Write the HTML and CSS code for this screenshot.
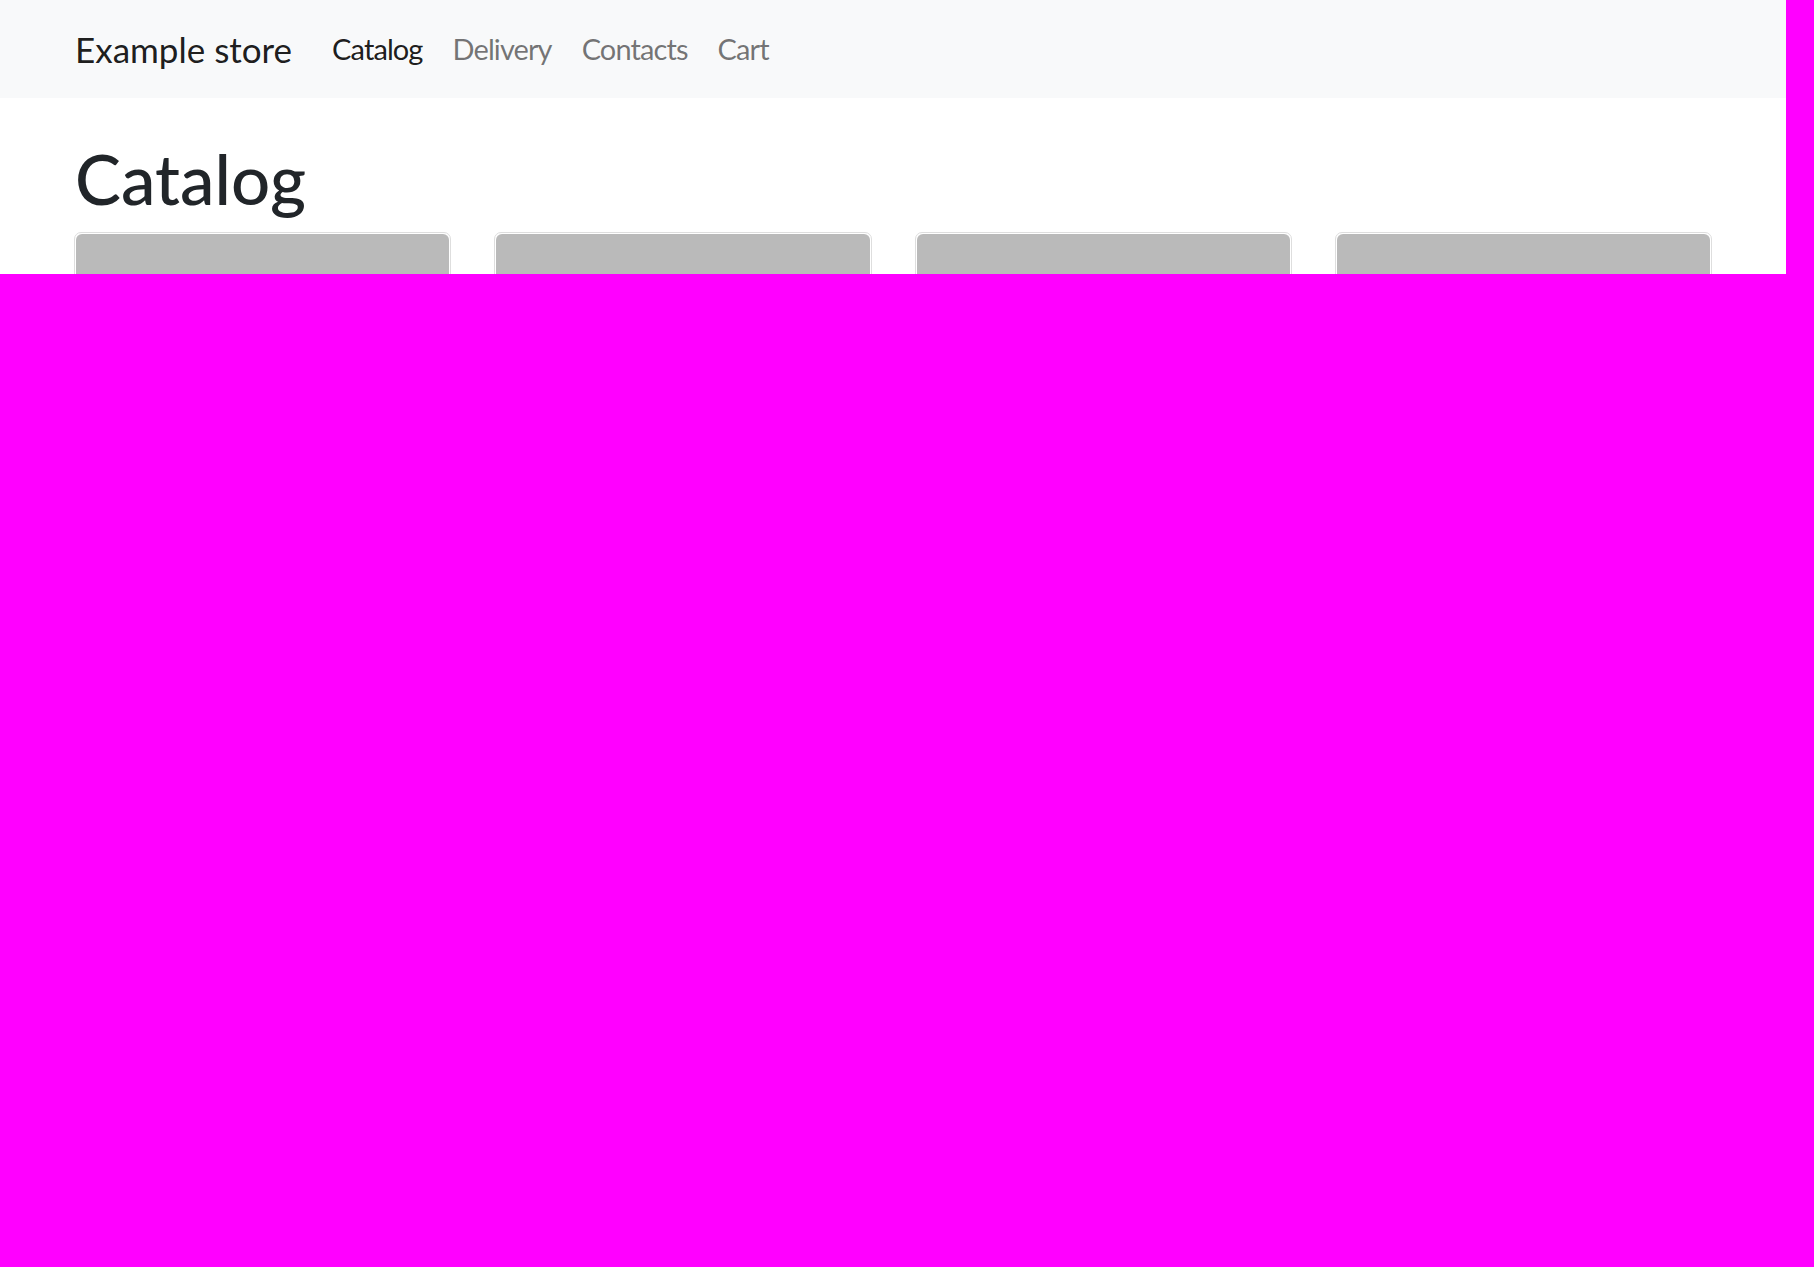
FILE: index.html
```html
<!DOCTYPE html>
<html lang="en">
<head>
<meta charset="utf-8">
<title>Example store</title>
<link rel="stylesheet" href="styles.css">
</head>
<body>
<div class="page">
  <nav class="navbar">
    <a class="brand" href="#">Example store</a>
    <ul class="nav-links">
      <li><a class="nav-link active" href="#">Catalog</a></li>
      <li><a class="nav-link" href="#">Delivery</a></li>
      <li><a class="nav-link" href="#">Contacts</a></li>
      <li><a class="nav-link" href="#">Cart</a></li>
    </ul>
  </nav>
  <main class="main">
    <h1 class="title">Catalog</h1>
    <div class="cards">
      <div class="card"><div class="card-img"></div></div>
      <div class="card"><div class="card-img"></div></div>
      <div class="card"><div class="card-img"></div></div>
      <div class="card"><div class="card-img"></div></div>
    </div>
  </main>
</div>
</body>
</html>
```
FILE: styles.css
```css
html, body {
  margin: 0;
  padding: 0;
}
body {
  background: #ff00ff;
  font-family: "Lato", "Open Sans", sans-serif;
}
.page {
  width: 1786px;
  height: 274px;
  overflow: hidden;
  background: #ffffff;
}
.navbar {
  height: 98px;
  box-sizing: border-box;
  background: #f8f9fa;
  display: flex;
  align-items: flex-start;
  padding: 0 74px;
}
.brand {
  font-size: 35px;
  line-height: 1.2;
  margin-top: 28px;
  color: rgba(0, 0, 0, 0.9);
  text-decoration: none;
  margin-right: 25px;
  padding-left: 1px;
}
.nav-links {
  list-style: none;
  margin: 32px 0 0;
  padding: 0;
  display: flex;
}
.nav-link {
  display: block;
  font-size: 29px;
  letter-spacing: -0.9px;
  line-height: 1.2;
  padding: 0 15px;
  color: rgba(0, 0, 0, 0.55);
  text-decoration: none;
}
.nav-link.active {
  color: rgba(0, 0, 0, 0.9);
}
.main {
  padding: 0 74px;
}
.title {
  margin: 40px 0 11px;
  font-size: 69px;
  font-weight: 500;
  line-height: 1.2;
  color: #212529;
  padding-left: 1px;
}
.cards {
  display: grid;
  grid-template-columns: repeat(4, 1fr);
  column-gap: 43px;
}
.card {
  border: 1px solid #dedede;
  border-radius: 7px;
  background: #ffffff;
  overflow: hidden;
  height: 400px;
}
.card-img {
  margin: 1px;
  height: 300px;
  background: #bababa;
  border-radius: 6px 6px 0 0;
}
```
